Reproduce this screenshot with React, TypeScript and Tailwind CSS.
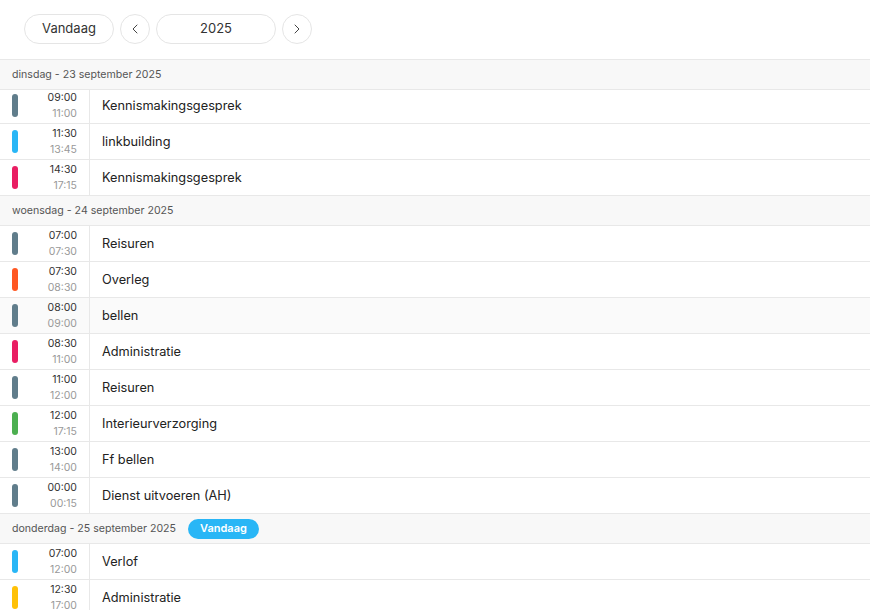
import { ChevronLeft, ChevronRight } from "lucide-react";

type Item = { from: string; to: string; title: string; color: string };

type Day = { label: string; today?: boolean; items: Item[] };

const days: Day[] = [
  {
    label: "dinsdag - 23 september 2025",
    items: [
      { from: "09:00", to: "11:00", title: "Kennismakingsgesprek", color: "bg-[#607d8b]" },
      { from: "11:30", to: "13:45", title: "linkbuilding", color: "bg-[#29b6f6]" },
      { from: "14:30", to: "17:15", title: "Kennismakingsgesprek", color: "bg-[#e91e63]" },
    ],
  },
  {
    label: "woensdag - 24 september 2025",
    items: [
      { from: "07:00", to: "07:30", title: "Reisuren", color: "bg-[#607d8b]" },
      { from: "07:30", to: "08:30", title: "Overleg", color: "bg-[#ff5722]" },
      { from: "08:00", to: "09:00", title: "bellen", color: "bg-[#607d8b]" },
      { from: "08:30", to: "11:00", title: "Administratie", color: "bg-[#e91e63]" },
      { from: "11:00", to: "12:00", title: "Reisuren", color: "bg-[#607d8b]" },
      { from: "12:00", to: "17:15", title: "Interieurverzorging", color: "bg-[#4caf50]" },
      { from: "13:00", to: "14:00", title: "Ff bellen", color: "bg-[#607d8b]" },
      { from: "00:00", to: "00:15", title: "Dienst uitvoeren (AH)", color: "bg-[#607d8b]" },
    ],
  },
  {
    label: "donderdag - 25 september 2025",
    today: true,
    items: [
      { from: "07:00", to: "12:00", title: "Verlof", color: "bg-[#29b6f6]" },
      { from: "12:30", to: "17:00", title: "Administratie", color: "bg-[#ffc107]" },
    ],
  },
];

function Row({ item, clipped, hover }: { item: Item; clipped?: boolean; hover?: boolean }) {
  return (
    <div
      className={`overflow-hidden border-b border-[#e8e8e8] ${clipped ? "h-[34px]" : "h-[36px]"} ${
        hover ? "bg-[#fafafa]" : "bg-white"
      }`}
    >
      <div className={`flex h-[35px] ${clipped ? "-mt-[2px]" : ""}`}>
        <div className="flex w-[90px] shrink-0 items-center border-r border-[#e8e8e8] pl-3 pr-3">
          <span className={`h-[23px] w-[6px] rounded-full ${item.color}`} />
          <div className="ml-auto flex flex-col items-end text-[10.5px] leading-4">
            <span className="text-[#333]">{item.from}</span>
            <span className="text-[#999]">{item.to}</span>
          </div>
        </div>
        <div className="flex items-center pl-3 text-[12.75px] text-[#222]">{item.title}</div>
      </div>
    </div>
  );
}

export default function App() {
  return (
    <div className="h-[610px] w-[870px] overflow-hidden bg-white font-['Inter',sans-serif]">
      {/* Toolbar */}
      <div className="flex items-center gap-[6px] pl-6 pt-[14px] pb-[15px]">
        <button className="h-[30px] w-[90px] rounded-full border border-[#e5e5e5] text-[13px] text-[#333]">
          Vandaag
        </button>
        <button className="flex h-[30px] w-[30px] items-center justify-center rounded-full border border-[#e5e5e5] text-[#444]">
          <ChevronLeft size={16} strokeWidth={1.5} />
        </button>
        <button className="h-[30px] w-[120px] rounded-full border border-[#e5e5e5] text-[13px] text-[#333]">
          2025
        </button>
        <button className="flex h-[30px] w-[30px] items-center justify-center rounded-full border border-[#e5e5e5] text-[#444]">
          <ChevronRight size={16} strokeWidth={1.5} />
        </button>
      </div>

      {/* Agenda list */}
      <div className="border-t border-[#e8e8e8]">
        {days.map((day, di) => (
          <div key={day.label}>
            <div className="flex h-[30px] items-center gap-3 border-b border-[#e8e8e8] bg-[#f8f8f8] px-3">
              <span className="text-[10.6px] text-[#555]">{day.label}</span>
              {day.today && (
                <span className="flex h-[20px] w-[71px] items-center justify-center rounded-full bg-[#29b6f6] text-[11px] font-semibold text-white">
                  Vandaag
                </span>
              )}
            </div>
            {day.items.map((item, ii) => (
              <Row
                key={ii}
                item={item}
                clipped={di === 0 && ii === 0}
                hover={di === 1 && ii === 2}
              />
            ))}
          </div>
        ))}
      </div>
    </div>
  );
}
